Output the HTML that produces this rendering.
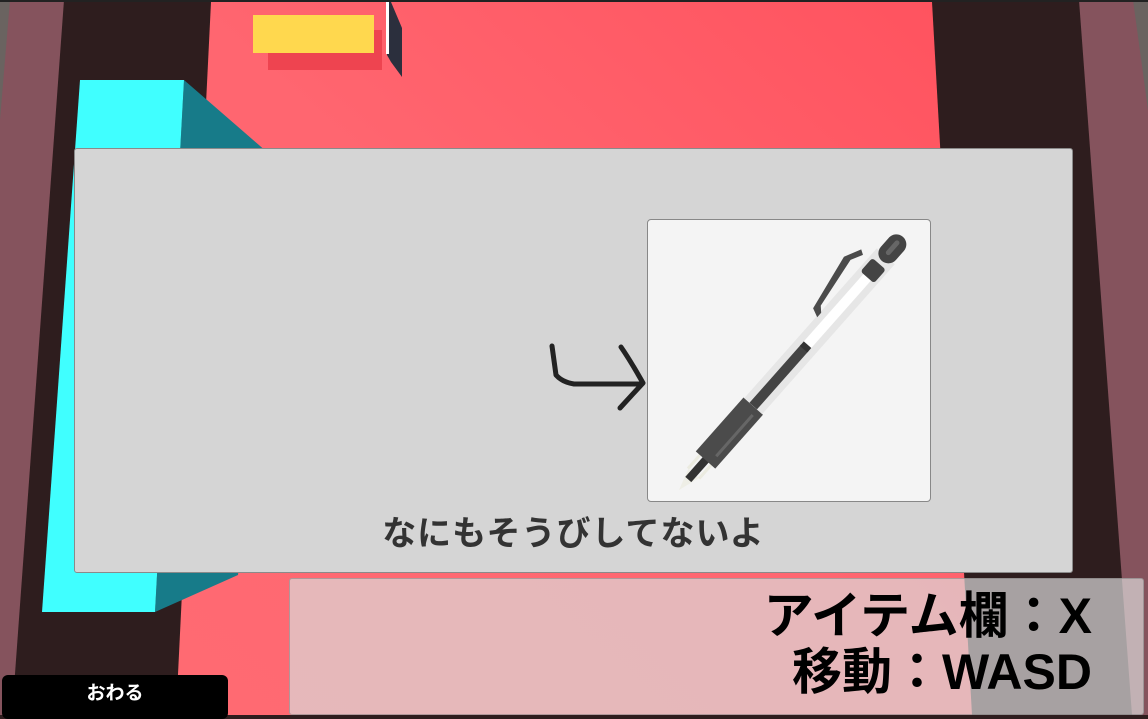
<!DOCTYPE html>
<html><head><meta charset="utf-8"><style>
html,body{margin:0;padding:0;width:1148px;height:715px;overflow:hidden;background:#2e1d1e;font-family:"Liberation Sans","Noto Sans CJK JP",sans-serif}
.abs{position:absolute}
</style></head><body>
<svg class="abs" style="left:0;top:0" width="1148" height="715">
<defs>
<linearGradient id="rg" x1="0" y1="1" x2="1" y2="0">
<stop offset="0" stop-color="#ff6a72"/><stop offset="0.5" stop-color="#ff6670"/><stop offset="1" stop-color="#ff525e"/></linearGradient>
</defs>
<rect width="1148" height="715" fill="#2e1d1e"/>
<polygon points="0,0 64,0 12,715 0,715" fill="#85535d"/>
<polygon points="0,0 10,0 0,120" fill="#6a6360"/>
<polygon points="1079,0 1148,0 1148,715 1132,715" fill="#85535d"/>
<polygon points="1133,0 1148,0 1148,110" fill="#6a6360"/>
<polygon points="211,2 932,2 972,715 176,715" fill="url(#rg)"/>
<rect x="0" y="0" width="1148" height="2" fill="#222"/>
<polygon points="184,80 282,165 238,575 155,612" fill="#177b89"/>
<polygon points="80,80 184,80 155,612 42,612" fill="#40ffff"/>
<rect x="268" y="30" width="114" height="40" fill="#ee4450"/>
<rect x="253" y="15" width="121" height="38" fill="#ffd84e"/>
<polygon points="387,2 391,2 402,28 402,77 391,62 387,55" fill="#2b2f3d"/>
<rect x="386" y="2" width="3" height="52" fill="#fff"/>
</svg>

<div class="abs" style="left:74px;top:148px;width:997px;height:423px;background:#d5d5d5;border:1px solid #8a8a8a;border-radius:3px"></div>
<div class="abs" style="left:647px;top:219px;width:282px;height:281px;background:#f4f4f4;border:1px solid #888;border-radius:4px"></div>

<svg class="abs" style="left:0;top:0" width="1148" height="715">
<path d="M552,346 L556,375 Q562,382 574,384 L642,384 M621,347 Q630,360 643,383 Q632,395 620,408" fill="none" stroke="#222" stroke-width="5" stroke-linecap="round" stroke-linejoin="round"/>
<g transform="translate(679,490) rotate(-48.5)">
<polygon points="0,0 22,-7 22,7" fill="#eeeee6"/>
<rect x="14" y="-4" width="30" height="8" fill="#333"/>
<rect x="22" y="-9" width="20" height="3" fill="#ebebe0"/>
<rect x="22" y="6" width="20" height="3" fill="#ebebe0"/>
<rect x="40" y="-13" width="72" height="26" fill="#4b4b4b"/>
<rect x="50" y="4" width="55" height="3" fill="#666"/>
<rect x="112" y="-12" width="200" height="24" fill="#e6e6e6"/>
<rect x="112" y="-5" width="78" height="10" fill="#444"/>
<rect x="190" y="-5" width="100" height="10" fill="#fff"/>
<rect x="188" y="-5" width="6" height="10" fill="#333"/>
<rect x="284" y="-9" width="18" height="18" rx="3" fill="#444"/>
<rect x="306" y="-10" width="32" height="20" rx="10" fill="#444"/>
<rect x="314" y="-3" width="18" height="5" rx="2.5" fill="#666"/>
<path d="M221,-11 L225,-20 L284,-31 L301,-23 L298,-18 L286,-24 L232,-16 L227,-11 Z" fill="#4b4b4b"/>
</g>
</svg>

<div class="abs" style="left:74px;top:506px;width:999px;text-align:center;font-size:34px;font-weight:bold;color:#333;letter-spacing:1px">なにもそうびしてないよ</div>

<div class="abs" style="left:289px;top:578px;width:855px;height:137px;background:rgba(220,218,218,0.7);border:1px solid rgba(120,120,120,0.5);border-radius:3px;box-sizing:border-box"></div>
<div class="abs" style="left:600px;top:588px;width:492px;text-align:right;font-size:50px;font-weight:bold;color:#000;line-height:56px">アイテム欄：X<br>移動：WASD</div>

<div class="abs" style="left:2px;top:675px;width:226px;height:44px;background:#000;border-radius:6px;color:#fff;font-size:19px;font-weight:bold;text-align:center;line-height:38px">おわる</div>
</body></html>
